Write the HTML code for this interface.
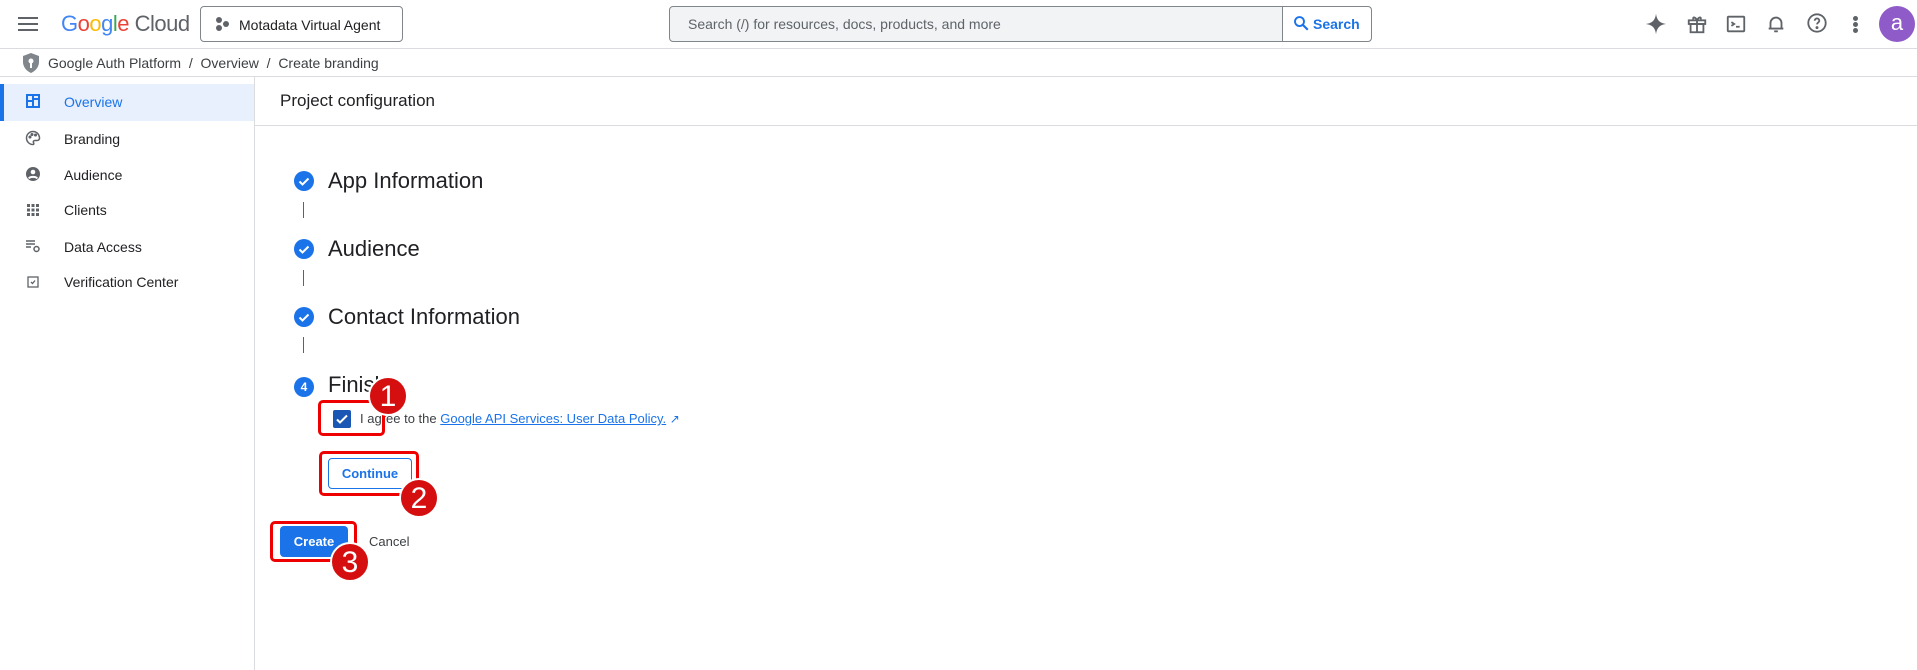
<!DOCTYPE html><html><head><style>
*{box-sizing:border-box;margin:0;padding:0}
body{width:1917px;height:670px;overflow:hidden;background:#fff;font-family:"Liberation Sans",Arial,sans-serif;color:#202124;position:relative}
.a{position:absolute}
.sb{font-size:14px;color:#202124}
.ic{position:absolute;width:16px;height:16px}
.red{position:absolute;border:3px solid #e00;border-radius:5px}
.num{position:absolute;width:40px;height:40px;border-radius:50%;background:#d50f0f;border:2px solid #fff;color:#fff;font-size:30px;text-align:center;line-height:37px;font-family:"Liberation Sans",sans-serif}
.chk{position:absolute;width:20px;height:20px;border-radius:50%;background:#1a73e8}
</style></head><body>
<div class="a" style="left:0;top:0;width:1917px;height:49px;border-bottom:1px solid #dadce0"></div>
<div class="a" style="left:18px;top:17px;width:20px;height:2px;background:#5f6368;box-shadow:0 6px 0 #5f6368,0 12px 0 #5f6368"></div>
<div class="a" style="left:61px;top:11px;font-size:22px;letter-spacing:-0.5px"><span style="color:#4285f4">G</span><span style="color:#ea4335">o</span><span style="color:#fbbc04">o</span><span style="color:#4285f4">g</span><span style="color:#34a853">l</span><span style="color:#ea4335">e</span> <span style="color:#5f6368">Cloud</span></div>
<div class="a" style="left:200px;top:6px;width:203px;height:36px;border:1px solid #80868b;border-radius:4px;font-size:14px;padding:10px 0 0 38px">Motadata Virtual Agent</div>
<div class="a" style="left:216px;top:17px;width:6px;height:6px;border-radius:50%;background:#5f6368;box-shadow:7px 4px 0 #5f6368,0 8px 0 #5f6368"></div>
<div class="a" style="left:669px;top:6px;width:703px;height:36px;border:1px solid #80868b;border-radius:4px;background:#f1f3f4"></div>
<div class="a" style="left:688px;top:16px;font-size:14px;color:#5f6368">Search (/) for resources, docs, products, and more</div>
<div class="a" style="left:1282px;top:7px;width:89px;height:34px;background:#fff;border-left:1px solid #80868b;border-radius:0 4px 4px 0;color:#1a73e8;font-size:14px;font-weight:bold;padding:9px 0 0 30px">Search</div>
<svg class="a" style="left:1292px;top:14px" width="18" height="18" viewBox="0 0 24 24"><circle cx="10" cy="10" r="6" fill="none" stroke="#1a73e8" stroke-width="2.5"/><path d="M14.5 14.5L21 21" stroke="#1a73e8" stroke-width="2.8"/></svg>
<svg class="a" style="left:1645px;top:13px" width="22" height="22" viewBox="0 0 24 24"><path d="M12 1C13 8 16 11 23 12C16 13 13 16 12 23C11 16 8 13 1 12C8 11 11 8 12 1Z" fill="#5f6368"/></svg>
<svg class="a" style="left:1686px;top:13px" width="22" height="22" viewBox="0 0 24 24" fill="none" stroke="#5f6368" stroke-width="2"><rect x="3" y="8" width="18" height="4"/><rect x="5" y="12" width="14" height="9"/><path d="M12 8v13M12 8C10 4 7 4 8 7M12 8C14 4 17 4 16 7"/></svg>
<svg class="a" style="left:1725px;top:13px" width="22" height="22" viewBox="0 0 24 24" fill="none" stroke="#5f6368" stroke-width="2"><rect x="3" y="4" width="18" height="16" rx="1"/><path d="M7 10l3 2-3 2M12 15h4"/></svg>
<svg class="a" style="left:1765px;top:13px" width="22" height="22" viewBox="0 0 24 24" fill="none" stroke="#5f6368" stroke-width="2"><path d="M6 17V11a6 6 0 0112 0v6zM4 17h16M10 20h4"/></svg>
<svg class="a" style="left:1806px;top:12px" width="22" height="22" viewBox="0 0 24 24" fill="none" stroke="#5f6368" stroke-width="2"><circle cx="12" cy="12" r="9.5"/><path d="M9.5 9.5a2.5 2.5 0 115 0c0 2-2.5 2-2.5 4"/><circle cx="12" cy="17" r=".6" fill="#5f6368"/></svg>
<div class="a" style="left:1853px;top:16px;width:5px;height:5px;border-radius:50%;background:#5f6368;box-shadow:0 6px 0 #5f6368,0 12px 0 #5f6368"></div>
<div class="a" style="left:1879px;top:6px;width:36px;height:36px;border-radius:50%;background:#8e5bc8;color:#fff;font-size:22px;text-align:center;line-height:34px">a</div>
<div class="a" style="left:0;top:49px;width:1917px;height:28px;border-bottom:1px solid #dadce0"></div>
<svg class="a" style="left:22px;top:52px" width="18" height="22" viewBox="0 0 18 22"><path d="M9 1L17 4V10C17 15 13.5 19 9 21C4.5 19 1 15 1 10V4Z" fill="#80868b"/><circle cx="9" cy="9" r="2.5" fill="#fff"/><path d="M9 11v5" stroke="#fff" stroke-width="2"/></svg>
<div class="a" style="left:48px;top:55px;font-size:14px;color:#3c4043">Google Auth Platform &nbsp;/ &nbsp;Overview &nbsp;/ &nbsp;Create branding</div>
<div class="a" style="left:254px;top:77px;width:1px;height:593px;background:#dadce0"></div>
<div class="a" style="left:0;top:84px;width:254px;height:37px;background:#e8f0fe;border-left:4px solid #1a73e8"></div>
<div class="a sb" style="left:64px;top:94px;color:#1a73e8">Overview</div>
<div class="a sb" style="left:64px;top:131px">Branding</div>
<div class="a sb" style="left:64px;top:167px">Audience</div>
<div class="a sb" style="left:64px;top:202px">Clients</div>
<div class="a sb" style="left:64px;top:239px">Data Access</div>
<div class="a sb" style="left:64px;top:274px">Verification Center</div>
<svg class="ic" style="left:25px;top:93px" viewBox="0 0 16 16" fill="none" stroke="#1a73e8" stroke-width="2"><rect x="2" y="2" width="12" height="12"/><path d="M8 2v12M2 8h6M8 6h6"/></svg>
<svg class="ic" style="left:25px;top:130px" viewBox="0 0 16 16" fill="none" stroke="#5f6368" stroke-width="1.5"><path d="M8 1.5a6.5 6.5 0 100 13c1 0 1-1 .5-2s0-2 1.5-2h2a2.5 2.5 0 002.5-3C14 4 11.5 1.5 8 1.5z"/><circle cx="5" cy="7" r=".8" fill="#5f6368"/><circle cx="7" cy="4.5" r=".8" fill="#5f6368"/><circle cx="10.5" cy="5" r=".8" fill="#5f6368"/></svg>
<svg class="ic" style="left:25px;top:166px" viewBox="0 0 16 16"><circle cx="8" cy="8" r="7" fill="#5f6368"/><circle cx="8" cy="6" r="2.3" fill="#fff"/><path d="M3.8 12.5C5 10.3 11 10.3 12.2 12.5" stroke="#fff" stroke-width="2" fill="none"/></svg>
<svg class="ic" style="left:25px;top:202px" viewBox="0 0 16 16" fill="#5f6368"><rect x="2" y="2" width="3" height="3"/><rect x="6.5" y="2" width="3" height="3"/><rect x="11" y="2" width="3" height="3"/><rect x="2" y="6.5" width="3" height="3"/><rect x="6.5" y="6.5" width="3" height="3"/><rect x="11" y="6.5" width="3" height="3"/><rect x="2" y="11" width="3" height="3"/><rect x="6.5" y="11" width="3" height="3"/><rect x="11" y="11" width="3" height="3"/></svg>
<svg class="ic" style="left:25px;top:238px" viewBox="0 0 16 16" fill="none" stroke="#5f6368" stroke-width="1.5"><path d="M1 3h9M1 6h9M1 9h5"/><circle cx="11.5" cy="11" r="2.5"/></svg>
<svg class="ic" style="left:25px;top:274px" viewBox="0 0 16 16" fill="none" stroke="#5f6368" stroke-width="1.3"><rect x="3" y="3" width="10" height="10"/><path d="M6 8l1.5 1.5L10 6.5"/></svg>
<div class="a" style="left:280px;top:91px;font-size:17px">Project configuration</div>
<div class="a" style="left:255px;top:125px;width:1662px;height:1px;background:#dadce0"></div>
<div class="chk" style="left:294px;top:171px"></div><svg class="a" style="left:294px;top:171px" width="20" height="20"><path d="M5.5 10.5l3 3 6-6" stroke="#fff" stroke-width="2" fill="none"/></svg>
<div class="a" style="left:328px;top:168px;font-size:22px">App Information</div>
<div class="a" style="left:303px;top:202px;width:1px;height:16px;background:#5f6368"></div>
<div class="chk" style="left:294px;top:239px"></div><svg class="a" style="left:294px;top:239px" width="20" height="20"><path d="M5.5 10.5l3 3 6-6" stroke="#fff" stroke-width="2" fill="none"/></svg>
<div class="a" style="left:328px;top:236px;font-size:22px">Audience</div>
<div class="a" style="left:303px;top:270px;width:1px;height:16px;background:#5f6368"></div>
<div class="chk" style="left:294px;top:307px"></div><svg class="a" style="left:294px;top:307px" width="20" height="20"><path d="M5.5 10.5l3 3 6-6" stroke="#fff" stroke-width="2" fill="none"/></svg>
<div class="a" style="left:328px;top:304px;font-size:22px">Contact Information</div>
<div class="a" style="left:303px;top:337px;width:1px;height:16px;background:#5f6368"></div>
<div class="chk" style="left:294px;top:377px;color:#fff;font-size:12px;font-weight:bold;text-align:center;line-height:20px">4</div>
<div class="a" style="left:328px;top:372px;font-size:22px">Finish</div>
<div class="a" style="left:333px;top:410px;width:18px;height:18px;background:#1a57b5;border-radius:2px"></div>
<svg class="a" style="left:333px;top:410px" width="18" height="18"><path d="M4 9.5l3 3 7-7" stroke="#fff" stroke-width="2" fill="none"/></svg>
<div class="a" style="left:360px;top:411px;font-size:13px;color:#3c4043">I agree to the <span style="color:#1a73e8;text-decoration:underline">Google API Services: User Data Policy.</span> <span style="color:#1a73e8;font-size:12px">&#x2197;</span></div>
<div class="a" style="left:328px;top:458px;width:84px;height:31px;border:1px solid #1a73e8;border-radius:4px;color:#1a73e8;font-size:13px;text-align:center;line-height:29px;font-weight:bold">Continue</div>
<div class="a" style="left:280px;top:526px;width:68px;height:31px;background:#1a73e8;border-radius:4px;color:#fff;font-size:13px;font-weight:bold;text-align:center;line-height:31px">Create</div>
<div class="a" style="left:369px;top:534px;font-size:13px;color:#3c4043">Cancel</div>
<div class="red" style="left:318px;top:400px;width:67px;height:36px"></div>
<div class="red" style="left:319px;top:451px;width:100px;height:45px"></div>
<div class="red" style="left:270px;top:521px;width:87px;height:41px"></div>
<div class="num" style="left:368px;top:376px">1</div>
<div class="num" style="left:399px;top:478px">2</div>
<div class="num" style="left:330px;top:542px">3</div>
</body></html>
